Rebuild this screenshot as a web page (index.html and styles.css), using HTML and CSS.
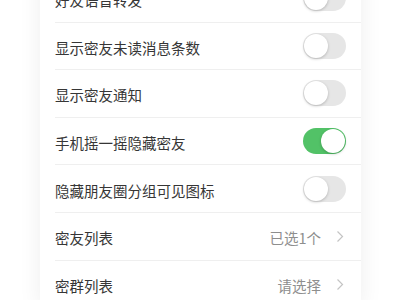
FILE: index.html
```html
<!DOCTYPE html>
<html lang="zh-CN">
<head>
    <meta charset="UTF-8">
    <meta name="viewport" content="width=device-width, initial-scale=1.0">
    <title>密友设置</title>
    <link rel="stylesheet" href="styles.css">
</head>
<body>
    <div class="card">
        <div class="cell">
            <span class="cell-label">好友语音转发</span>
            <span class="switch"></span>
        </div>
        <div class="cell">
            <span class="cell-label">显示密友未读消息条数</span>
            <span class="switch"></span>
        </div>
        <div class="cell">
            <span class="cell-label">显示密友通知</span>
            <span class="switch"></span>
        </div>
        <div class="cell">
            <span class="cell-label">手机摇一摇隐藏密友</span>
            <span class="switch switch-on"></span>
        </div>
        <div class="cell">
            <span class="cell-label">隐藏朋友圈分组可见图标</span>
            <span class="switch"></span>
        </div>
        <div class="cell">
            <span class="cell-label">密友列表</span>
            <span class="cell-value">已选1个</span>
            <svg class="arrow" width="8" height="13" viewBox="0 0 8 13"><path d="M1.5 1.5 L6.5 6.5 L1.5 11.5" fill="none" stroke="#c4c4c4" stroke-width="1.2"/></svg>
        </div>
        <div class="cell">
            <span class="cell-label">密群列表</span>
            <span class="cell-value">请选择</span>
            <svg class="arrow" width="8" height="13" viewBox="0 0 8 13"><path d="M1.5 1.5 L6.5 6.5 L1.5 11.5" fill="none" stroke="#c4c4c4" stroke-width="1.2"/></svg>
        </div>
    </div>
</body>
</html>
```

FILE: styles.css
```css
body {
    font-family: "Noto Sans CJK SC", "Noto Sans", sans-serif;
    margin: 0;
    background: #fff;
    overflow: hidden;
}

.card {
    width: 321px;
    margin: -25px 0 0 40px;
    padding-left: 15px;
    box-sizing: border-box;
    background: #fff;
    box-shadow: 0 0 22px rgba(0, 0, 0, 0.07);
}

.cell {
    display: flex;
    align-items: center;
    height: 47.6px;
    box-sizing: border-box;
    padding-right: 15px;
    border-bottom: 1px solid #efefef;
}

.cell:last-child {
    border-bottom: none;
}

.cell-label {
    flex: 1;
    padding-top: 3px;
    font-size: 14.5px;
    color: #363636;
}

.cell-value {
    padding-top: 3px;
    font-size: 14.5px;
    color: #8e8e8e;
    margin-right: 15px;
}

.arrow {
    display: block;
    margin-right: 2px;
}

.switch {
    position: relative;
    width: 43px;
    height: 26px;
    border-radius: 13px;
    background: #e6e6e6;
}

.switch::after {
    content: "";
    position: absolute;
    top: 1px;
    left: 1px;
    width: 24px;
    height: 24px;
    border-radius: 50%;
    background: #fff;
    box-shadow: 0 1px 3px rgba(0, 0, 0, 0.22);
}

.switch-on {
    background: #52c267;
}

.switch-on::after {
    left: 18px;
}
```
